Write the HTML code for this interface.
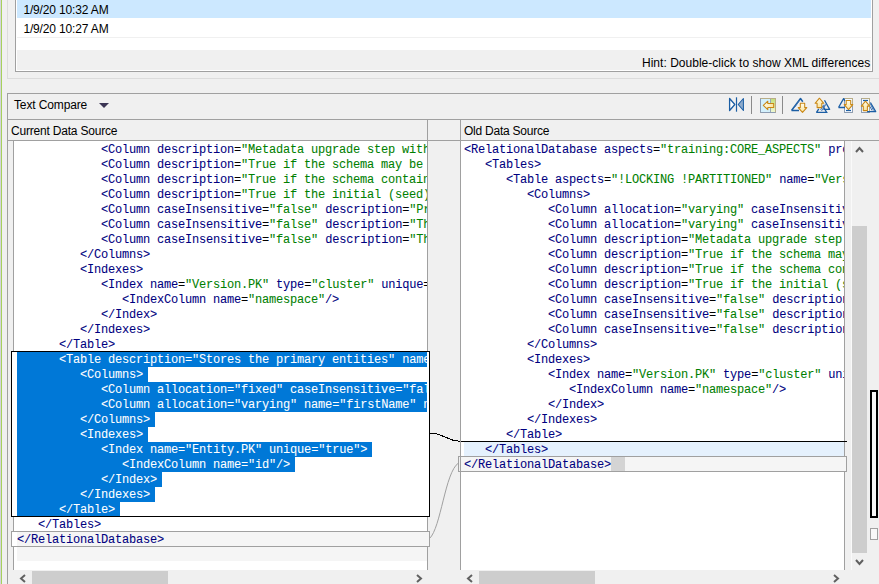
<!DOCTYPE html>
<html><head><meta charset="utf-8">
<style>
*{box-sizing:border-box;margin:0;padding:0}
html,body{width:879px;height:584px;overflow:hidden;background:#f0f0f0;position:relative}
.a{position:absolute}
.ui{font-family:"Liberation Sans",sans-serif;font-size:12px;color:#000;white-space:pre;line-height:14px}
.code{font-family:"Liberation Mono",monospace;font-size:12px;letter-spacing:-0.2px;line-height:15px;white-space:pre;color:#000;-webkit-text-stroke:0.06px currentColor}
.t{color:#000080}
.v{color:#008000}
.sel{background:#0078d7;color:#fff}
.sel .t,.sel .v{color:#fff}
</style></head><body>
<!-- left strip -->
<div class="a" style="left:0;top:0;width:1px;height:584px;background:#d4d4dc"></div>
<div class="a" style="left:1px;top:0;width:1px;height:584px;background:#a6d15c"></div>

<!-- history panel -->
<div class="a" style="left:7px;top:-10px;width:900px;height:89px;border:1px solid #dcdcdc"></div>
<div class="a" style="left:15px;top:-10px;width:858px;height:82px;border:1px solid #a0a0a0;background:#fff"></div>
<div class="a" style="left:17px;top:0;width:854px;height:18px;background:#cce8ff"></div>
<div class="a" style="left:17px;top:37px;width:854px;height:1px;background:#f0f0f0"></div>
<div class="a" style="left:17px;top:50px;width:854px;height:20px;background:#f0f0f0"></div>
<div class="a ui" style="left:23.4px;top:3px;letter-spacing:-0.15px">1/9/20 10:32 AM</div>
<div class="a ui" style="left:23.4px;top:22px;letter-spacing:-0.15px">1/9/20 10:27 AM</div>
<div class="a ui" style="left:642px;top:56px;letter-spacing:0.02px">Hint: Double-click to show XML differences</div>

<!-- compare panel -->
<div class="a" style="left:7px;top:93px;width:900px;height:600px;border:1px solid #a0a0a0"></div>
<div class="a ui" style="left:14px;top:98px;letter-spacing:-0.13px">Text Compare</div>
<div class="a" style="left:99px;top:103px;width:0;height:0;border-left:5px solid transparent;border-right:5px solid transparent;border-top:5px solid #3b3554"></div>
<div class="a" style="left:8px;top:119px;width:900px;height:1px;background:#a0a0a0"></div>
<div class="a" style="left:8px;top:140px;width:900px;height:1px;background:#a0a0a0"></div>
<div class="a" style="left:427px;top:120px;width:1px;height:450px;background:#a0a0a0"></div>
<div class="a" style="left:460px;top:120px;width:1px;height:450px;background:#a0a0a0"></div>
<div class="a ui" style="left:11px;top:124px;letter-spacing:-0.2px">Current Data Source</div>
<div class="a ui" style="left:464px;top:124px;letter-spacing:-0.24px">Old Data Source</div>

<!-- left text area -->
<div class="a" style="left:13px;top:141px;width:1px;height:429px;background:#a0a0a0"></div>
<div class="a" style="left:14px;top:141px;width:413px;height:429px;background:#fff;overflow:hidden">
<div class="a" style="left:3px;top:391px;width:410px;height:29px;background:#f5f5f5"></div>
<div class="a" style="left:3px;top:211px;width:488px;height:15px;background:#0078d7"></div>
<div class="a" style="left:3px;top:226px;width:131px;height:15px;background:#0078d7"></div>
<div class="a" style="left:3px;top:241px;width:523px;height:15px;background:#0078d7"></div>
<div class="a" style="left:3px;top:256px;width:530px;height:15px;background:#0078d7"></div>
<div class="a" style="left:3px;top:271px;width:138px;height:15px;background:#0078d7"></div>
<div class="a" style="left:3px;top:286px;width:131px;height:15px;background:#0078d7"></div>
<div class="a" style="left:3px;top:301px;width:355px;height:15px;background:#0078d7"></div>
<div class="a" style="left:3px;top:316px;width:278px;height:15px;background:#0078d7"></div>
<div class="a" style="left:3px;top:331px;width:145px;height:15px;background:#0078d7"></div>
<div class="a" style="left:3px;top:346px;width:138px;height:15px;background:#0078d7"></div>
<div class="a" style="left:3px;top:361px;width:103px;height:15px;background:#0078d7"></div>
<div class="a code" style="left:3px;top:2px;background:none">            <span class="t">&lt;Column</span> <span class="t">description</span>=<span class="v">"Metadata upgrade step with some more text here"</span></div>
<div class="a code" style="left:3px;top:17px;background:none">            <span class="t">&lt;Column</span> <span class="t">description</span>=<span class="v">"True if the schema may be modified"</span></div>
<div class="a code" style="left:3px;top:32px;background:none">            <span class="t">&lt;Column</span> <span class="t">description</span>=<span class="v">"True if the schema contains data"</span></div>
<div class="a code" style="left:3px;top:47px;background:none">            <span class="t">&lt;Column</span> <span class="t">description</span>=<span class="v">"True if the initial (seed) data"</span></div>
<div class="a code" style="left:3px;top:62px;background:none">            <span class="t">&lt;Column</span> <span class="t">caseInsensitive</span>=<span class="v">"false"</span> <span class="t">description</span>=<span class="v">"Primary key"</span></div>
<div class="a code" style="left:3px;top:77px;background:none">            <span class="t">&lt;Column</span> <span class="t">caseInsensitive</span>=<span class="v">"false"</span> <span class="t">description</span>=<span class="v">"The name"</span></div>
<div class="a code" style="left:3px;top:92px;background:none">            <span class="t">&lt;Column</span> <span class="t">caseInsensitive</span>=<span class="v">"false"</span> <span class="t">description</span>=<span class="v">"The value"</span></div>
<div class="a code" style="left:3px;top:107px;background:none">         <span class="t">&lt;/Columns&gt;</span></div>
<div class="a code" style="left:3px;top:122px;background:none">         <span class="t">&lt;Indexes&gt;</span></div>
<div class="a code" style="left:3px;top:137px;background:none">            <span class="t">&lt;Index</span> <span class="t">name</span>=<span class="v">"Version.PK"</span> <span class="t">type</span>=<span class="v">"cluster"</span> <span class="t">unique</span>=<span class="v">"true"</span><span class="t">&gt;</span></div>
<div class="a code" style="left:3px;top:152px;background:none">               <span class="t">&lt;IndexColumn</span> <span class="t">name</span>=<span class="v">"namespace"</span><span class="t">/&gt;</span></div>
<div class="a code" style="left:3px;top:167px;background:none">            <span class="t">&lt;/Index&gt;</span></div>
<div class="a code" style="left:3px;top:182px;background:none">         <span class="t">&lt;/Indexes&gt;</span></div>
<div class="a code" style="left:3px;top:197px;background:none">      <span class="t">&lt;/Table&gt;</span></div>
<div class="a code sel" style="left:3px;top:212px;background:none">      <span class="t">&lt;Table</span> <span class="t">description</span>=<span class="v">"Stores the primary entities"</span> <span class="t">name</span>=<span class="v">"Entity"</span><span class="t">&gt;</span></div>
<div class="a code sel" style="left:3px;top:227px;background:none">         <span class="t">&lt;Columns&gt;</span></div>
<div class="a code sel" style="left:3px;top:242px;background:none">            <span class="t">&lt;Column</span> <span class="t">allocation</span>=<span class="v">"fixed"</span> <span class="t">caseInsensitive</span>=<span class="v">"false"</span> <span class="t">name</span>=<span class="v">"id"</span><span class="t">/&gt;</span></div>
<div class="a code sel" style="left:3px;top:257px;background:none">            <span class="t">&lt;Column</span> <span class="t">allocation</span>=<span class="v">"varying"</span> <span class="t">name</span>=<span class="v">"firstName"</span> <span class="t">nullable</span>=<span class="v">"true"</span><span class="t">/&gt;</span></div>
<div class="a code sel" style="left:3px;top:272px;background:none">         <span class="t">&lt;/Columns&gt;</span></div>
<div class="a code sel" style="left:3px;top:287px;background:none">         <span class="t">&lt;Indexes&gt;</span></div>
<div class="a code sel" style="left:3px;top:302px;background:none">            <span class="t">&lt;Index</span> <span class="t">name</span>=<span class="v">"Entity.PK"</span> <span class="t">unique</span>=<span class="v">"true"</span><span class="t">&gt;</span></div>
<div class="a code sel" style="left:3px;top:317px;background:none">               <span class="t">&lt;IndexColumn</span> <span class="t">name</span>=<span class="v">"id"</span><span class="t">/&gt;</span></div>
<div class="a code sel" style="left:3px;top:332px;background:none">            <span class="t">&lt;/Index&gt;</span></div>
<div class="a code sel" style="left:3px;top:347px;background:none">         <span class="t">&lt;/Indexes&gt;</span></div>
<div class="a code sel" style="left:3px;top:362px;background:none">      <span class="t">&lt;/Table&gt;</span></div>
<div class="a code" style="left:3px;top:377px;background:none">   <span class="t">&lt;/Tables&gt;</span></div>
<div class="a code" style="left:3px;top:392px;background:none"><span class="t">&lt;/RelationalDatabase&gt;</span></div>
</div>

<!-- right text area -->
<div class="a" style="left:461px;top:141px;width:383px;height:429px;background:#fff;overflow:hidden">
<div class="a" style="left:3px;top:301px;width:400px;height:14px;background:#e5f1fd"></div>
<div class="a" style="left:0;top:316px;width:400px;height:14px;background:#f5f5f5"></div>
<div class="a" style="left:150px;top:316px;width:14px;height:14px;background:#d4d4d4"></div>
<div class="a code" style="left:3px;top:2px"><span class="t">&lt;RelationalDatabase</span> <span class="t">aspects</span>=<span class="v">"training:CORE_ASPECTS"</span> <span class="t">projection</span>=<span class="v">"x"</span><span class="t">&gt;</span></div>
<div class="a code" style="left:3px;top:17px">   <span class="t">&lt;Tables&gt;</span></div>
<div class="a code" style="left:3px;top:32px">      <span class="t">&lt;Table</span> <span class="t">aspects</span>=<span class="v">"!LOCKING !PARTITIONED"</span> <span class="t">name</span>=<span class="v">"Version"</span><span class="t">&gt;</span></div>
<div class="a code" style="left:3px;top:47px">         <span class="t">&lt;Columns&gt;</span></div>
<div class="a code" style="left:3px;top:62px">            <span class="t">&lt;Column</span> <span class="t">allocation</span>=<span class="v">"varying"</span> <span class="t">caseInsensitive</span>=<span class="v">"false"</span><span class="t">/&gt;</span></div>
<div class="a code" style="left:3px;top:77px">            <span class="t">&lt;Column</span> <span class="t">allocation</span>=<span class="v">"varying"</span> <span class="t">caseInsensitive</span>=<span class="v">"false"</span><span class="t">/&gt;</span></div>
<div class="a code" style="left:3px;top:92px">            <span class="t">&lt;Column</span> <span class="t">description</span>=<span class="v">"Metadata upgrade step with"</span><span class="t">/&gt;</span></div>
<div class="a code" style="left:3px;top:107px">            <span class="t">&lt;Column</span> <span class="t">description</span>=<span class="v">"True if the schema may be"</span><span class="t">/&gt;</span></div>
<div class="a code" style="left:3px;top:122px">            <span class="t">&lt;Column</span> <span class="t">description</span>=<span class="v">"True if the schema contains"</span><span class="t">/&gt;</span></div>
<div class="a code" style="left:3px;top:137px">            <span class="t">&lt;Column</span> <span class="t">description</span>=<span class="v">"True if the initial (seed)"</span><span class="t">/&gt;</span></div>
<div class="a code" style="left:3px;top:152px">            <span class="t">&lt;Column</span> <span class="t">caseInsensitive</span>=<span class="v">"false"</span> <span class="t">description</span>=<span class="v">"Primary"</span><span class="t">/&gt;</span></div>
<div class="a code" style="left:3px;top:167px">            <span class="t">&lt;Column</span> <span class="t">caseInsensitive</span>=<span class="v">"false"</span> <span class="t">description</span>=<span class="v">"The"</span><span class="t">/&gt;</span></div>
<div class="a code" style="left:3px;top:182px">            <span class="t">&lt;Column</span> <span class="t">caseInsensitive</span>=<span class="v">"false"</span> <span class="t">description</span>=<span class="v">"The"</span><span class="t">/&gt;</span></div>
<div class="a code" style="left:3px;top:197px">         <span class="t">&lt;/Columns&gt;</span></div>
<div class="a code" style="left:3px;top:212px">         <span class="t">&lt;Indexes&gt;</span></div>
<div class="a code" style="left:3px;top:227px">            <span class="t">&lt;Index</span> <span class="t">name</span>=<span class="v">"Version.PK"</span> <span class="t">type</span>=<span class="v">"cluster"</span> <span class="t">unique</span>=<span class="v">"true"</span><span class="t">&gt;</span></div>
<div class="a code" style="left:3px;top:242px">               <span class="t">&lt;IndexColumn</span> <span class="t">name</span>=<span class="v">"namespace"</span><span class="t">/&gt;</span></div>
<div class="a code" style="left:3px;top:257px">            <span class="t">&lt;/Index&gt;</span></div>
<div class="a code" style="left:3px;top:272px">         <span class="t">&lt;/Indexes&gt;</span></div>
<div class="a code" style="left:3px;top:287px">      <span class="t">&lt;/Table&gt;</span></div>
<div class="a code" style="left:3px;top:302px">   <span class="t">&lt;/Tables&gt;</span></div>
<div class="a code" style="left:3px;top:317px"><span class="t">&lt;/RelationalDatabase&gt;</span></div>
</div>


<!-- diff overlays -->
<div class="a" style="left:11px;top:351px;width:419px;height:166px;border:1px solid #000;border-right-width:1px"></div>
<div class="a" style="left:12px;top:352px;width:5px;height:164px;background:#fff"></div>
<div class="a" style="left:11px;top:531px;width:419px;height:16px;border:1px solid #a0a0a0"></div>
<div class="a" style="left:12px;top:532px;width:5px;height:14px;background:#fff"></div>
<div class="a" style="left:427px;top:352px;width:2px;height:164px;background:#fff"></div>
<div class="a" style="left:427px;top:532px;width:2px;height:14px;background:#f5f5f5"></div>

<svg class="a" style="left:428px;top:420px" width="34" height="130" viewBox="428 420 34 130">
<rect x="430" y="433" width="7" height="1" fill="#000"/><rect x="437" y="434" width="3" height="1" fill="#000"/><rect x="440" y="435" width="3" height="1" fill="#000"/><rect x="442" y="436" width="3" height="1" fill="#000"/><rect x="445" y="437" width="3" height="1" fill="#000"/><rect x="447" y="438" width="3" height="1" fill="#000"/><rect x="450" y="439" width="3" height="1" fill="#000"/><rect x="452" y="440" width="6" height="1" fill="#000"/><rect x="458" y="441" width="2" height="1" fill="#000"/>
<path d="M429.5 538.5 C441 528 445 472 458.5 463" fill="none" stroke="#a0a0a0" stroke-width="1"/>
</svg>

<!-- scrollbars -->
<div class="a" style="left:844px;top:141px;width:1px;height:429px;background:#a0a0a0"></div>
<div class="a" style="left:458px;top:456px;width:389px;height:16px;border:1px solid #a0a0a0"></div>
<div class="a" style="left:844px;top:457px;width:2px;height:14px;background:#f5f5f5"></div>
<div class="a" style="left:461px;top:441px;width:386px;height:1px;background:#000"></div>
<div class="a" style="left:14px;top:570px;width:413px;height:14px;background:#f0f0f0"></div>
<div class="a" style="left:32px;top:571px;width:136px;height:13px;background:#cdcdcd"></div>
<svg class="a" style="left:19px;top:574px" width="8" height="9"><path d="M6 1 L2 4.5 L6 8" fill="none" stroke="#606060" stroke-width="2"/></svg>
<svg class="a" style="left:415px;top:574px" width="8" height="9"><path d="M2 1 L6 4.5 L2 8" fill="none" stroke="#606060" stroke-width="2"/></svg>
<div class="a" style="left:461px;top:570px;width:418px;height:14px;background:#f0f0f0"></div>
<div class="a" style="left:479px;top:571px;width:116px;height:13px;background:#cdcdcd"></div>
<svg class="a" style="left:466px;top:574px" width="8" height="9"><path d="M6 1 L2 4.5 L6 8" fill="none" stroke="#606060" stroke-width="2"/></svg>
<svg class="a" style="left:832px;top:574px" width="8" height="9"><path d="M2 1 L6 4.5 L2 8" fill="none" stroke="#606060" stroke-width="2"/></svg>
<div class="a" style="left:851px;top:141px;width:1px;height:429px;background:#fafafa"></div>
<div class="a" style="left:852px;top:226px;width:15px;height:327px;background:#cdcdcd"></div>
<svg class="a" style="left:855px;top:146px" width="9" height="8"><path d="M1 6 L4.5 2 L8 6" fill="none" stroke="#606060" stroke-width="2"/></svg>
<svg class="a" style="left:855px;top:558px" width="9" height="8"><path d="M1 2 L4.5 6 L8 2" fill="none" stroke="#606060" stroke-width="2"/></svg>
<div class="a" style="left:870px;top:390px;width:8px;height:128px;border:2px solid #000;background:#f8f8f8"></div>
<div class="a" style="left:870px;top:528px;width:8px;height:12px;border:1px solid #a0a0a0;background:#f8f8f8"></div>


<!-- toolbar icons -->
<svg class="a" style="left:720px;top:94px" width="159" height="24" viewBox="720 94 159 24">
<defs>
<linearGradient id="ar" x1="0" y1="0" x2="0" y2="1"><stop offset="0" stop-color="#fffcea"/><stop offset="1" stop-color="#fbe39a"/></linearGradient>
<linearGradient id="arh" x1="0" y1="0" x2="1" y2="0"><stop offset="0" stop-color="#fffcea"/><stop offset="1" stop-color="#fbe39a"/></linearGradient>
<linearGradient id="gr" x1="0" y1="0" x2="0" y2="1"><stop offset="0" stop-color="#c2e07a"/><stop offset="1" stop-color="#eef7d2"/></linearGradient>
</defs>
<!-- icon1 -->
<path d="M729.6 98.5 L734.8 104.5 L729.6 110.5 Z" fill="#fff" stroke="#1b5ea4" stroke-width="1.3" stroke-linejoin="round"/>
<path d="M736.5 97.3 V111.7" stroke="#1b5ea4" stroke-width="1.2"/>
<path d="M743.4 98.5 L738.2 104.5 L743.4 110.5 Z" fill="#8eabcc" stroke="#1b5ea4" stroke-width="1.05" stroke-linejoin="round"/>
<!-- sep -->
<path d="M751.5 96 V114" stroke="#8a8a8a" stroke-width="1"/>
<path d="M782.5 96 V114" stroke="#8a8a8a" stroke-width="1"/>
<!-- icon2 -->
<rect x="760.5" y="98.5" width="15" height="14" fill="#d3f0fc" stroke="#b9ad86" stroke-width="1"/>
<path d="M760.5 98.5 V112.5 H775.5" fill="none" stroke="#8c9cb2" stroke-width="1"/>
<rect x="771" y="99" width="4" height="13" fill="url(#gr)"/>
<path d="M770.5 99 V112" stroke="#98a8b8" stroke-width="1"/>
<path d="M763.3 105.4 L767.8 101.2 V103.5 H773.7 V107.5 H767.8 V109.7 Z" fill="url(#arh)" stroke="#c98715" stroke-width="1.05" stroke-linejoin="round"/>
<!-- icon3 -->
<path d="M791.5 110.5 L800.5 98.5 L802.8 101.8 M791.5 110.5 H799" fill="none" stroke="#1b5ea4" stroke-width="1.5" stroke-linejoin="round"/>
<path d="M794.5 107.5 L799.5 100.5" stroke="#3f74b4" stroke-width="1"/>
<path d="M800.3 103.3 H804.7 V107.6 H806.8 L802.5 112.4 L798.2 107.6 H800.3 Z" fill="url(#ar)" stroke="#c98715" stroke-width="1.05" stroke-linejoin="round"/>
<!-- icon4 -->
<path d="M816.5 112.3 L818.8 108.8 M816.2 112.3 H826.7 L822.8 106" fill="none" stroke="#1b5ea4" stroke-width="1.3"/>
<path d="M824.5 100.3 L829.6 109.4 H823.5" fill="none" stroke="#1b5ea4" stroke-width="1.3" stroke-linejoin="round"/>
<path d="M821.5 111 L825 105 M823 109.5 L826 104 M820.5 110 L824 104.5" stroke="#3f74b4" stroke-width="0.9"/>
<path d="M819.4 98.2 L823.8 103.3 H821.8 V107.6 H817.1 V103.3 H815.1 Z" fill="url(#ar)" stroke="#c98715" stroke-width="1.05" stroke-linejoin="round"/>
<!-- icon5 -->
<rect x="844.5" y="98.5" width="8" height="14" fill="#f4f9ff" stroke="#b9ad86" stroke-width="1"/>
<path d="M844.5 98.5 V112.5 H852.5 V106" fill="none" stroke="#8c9cb2" stroke-width="1"/>
<path d="M838.5 107.5 L843.6 98.6 L845 101 M838.5 107.5 H845" fill="none" stroke="#1b5ea4" stroke-width="1.3" stroke-linejoin="round"/>
<path d="M846 110.5 H851" stroke="#1b5ea4" stroke-width="1.2"/>
<path d="M846.2 100.4 H850.7 V104.6 H852.8 L848.5 109.6 L844.2 104.6 H846.2 Z" fill="url(#ar)" stroke="#c98715" stroke-width="1.05" stroke-linejoin="round"/>
<!-- icon6 -->
<rect x="861.5" y="98.5" width="8" height="14" fill="#f4f9ff" stroke="#b9ad86" stroke-width="1"/>
<path d="M861.5 98.5 V112.5 H869.5" fill="none" stroke="#8c9cb2" stroke-width="1"/>
<path d="M863 100.5 H868" stroke="#1b5ea4" stroke-width="1.2"/>
<path d="M870.4 102.5 L875.7 111.6 H867" fill="none" stroke="#1b5ea4" stroke-width="1.3" stroke-linejoin="round"/>
<path d="M870.5 104 L873.5 110.5 M870 106.5 L872 110.5" stroke="#3f74b4" stroke-width="1"/>
<path d="M865.5 101.2 L869.7 106.1 H867.4 V110.6 H863.3 V106.1 H861.3 Z" fill="url(#ar)" stroke="#c98715" stroke-width="1.05" stroke-linejoin="round"/>
</svg>

</body></html>
